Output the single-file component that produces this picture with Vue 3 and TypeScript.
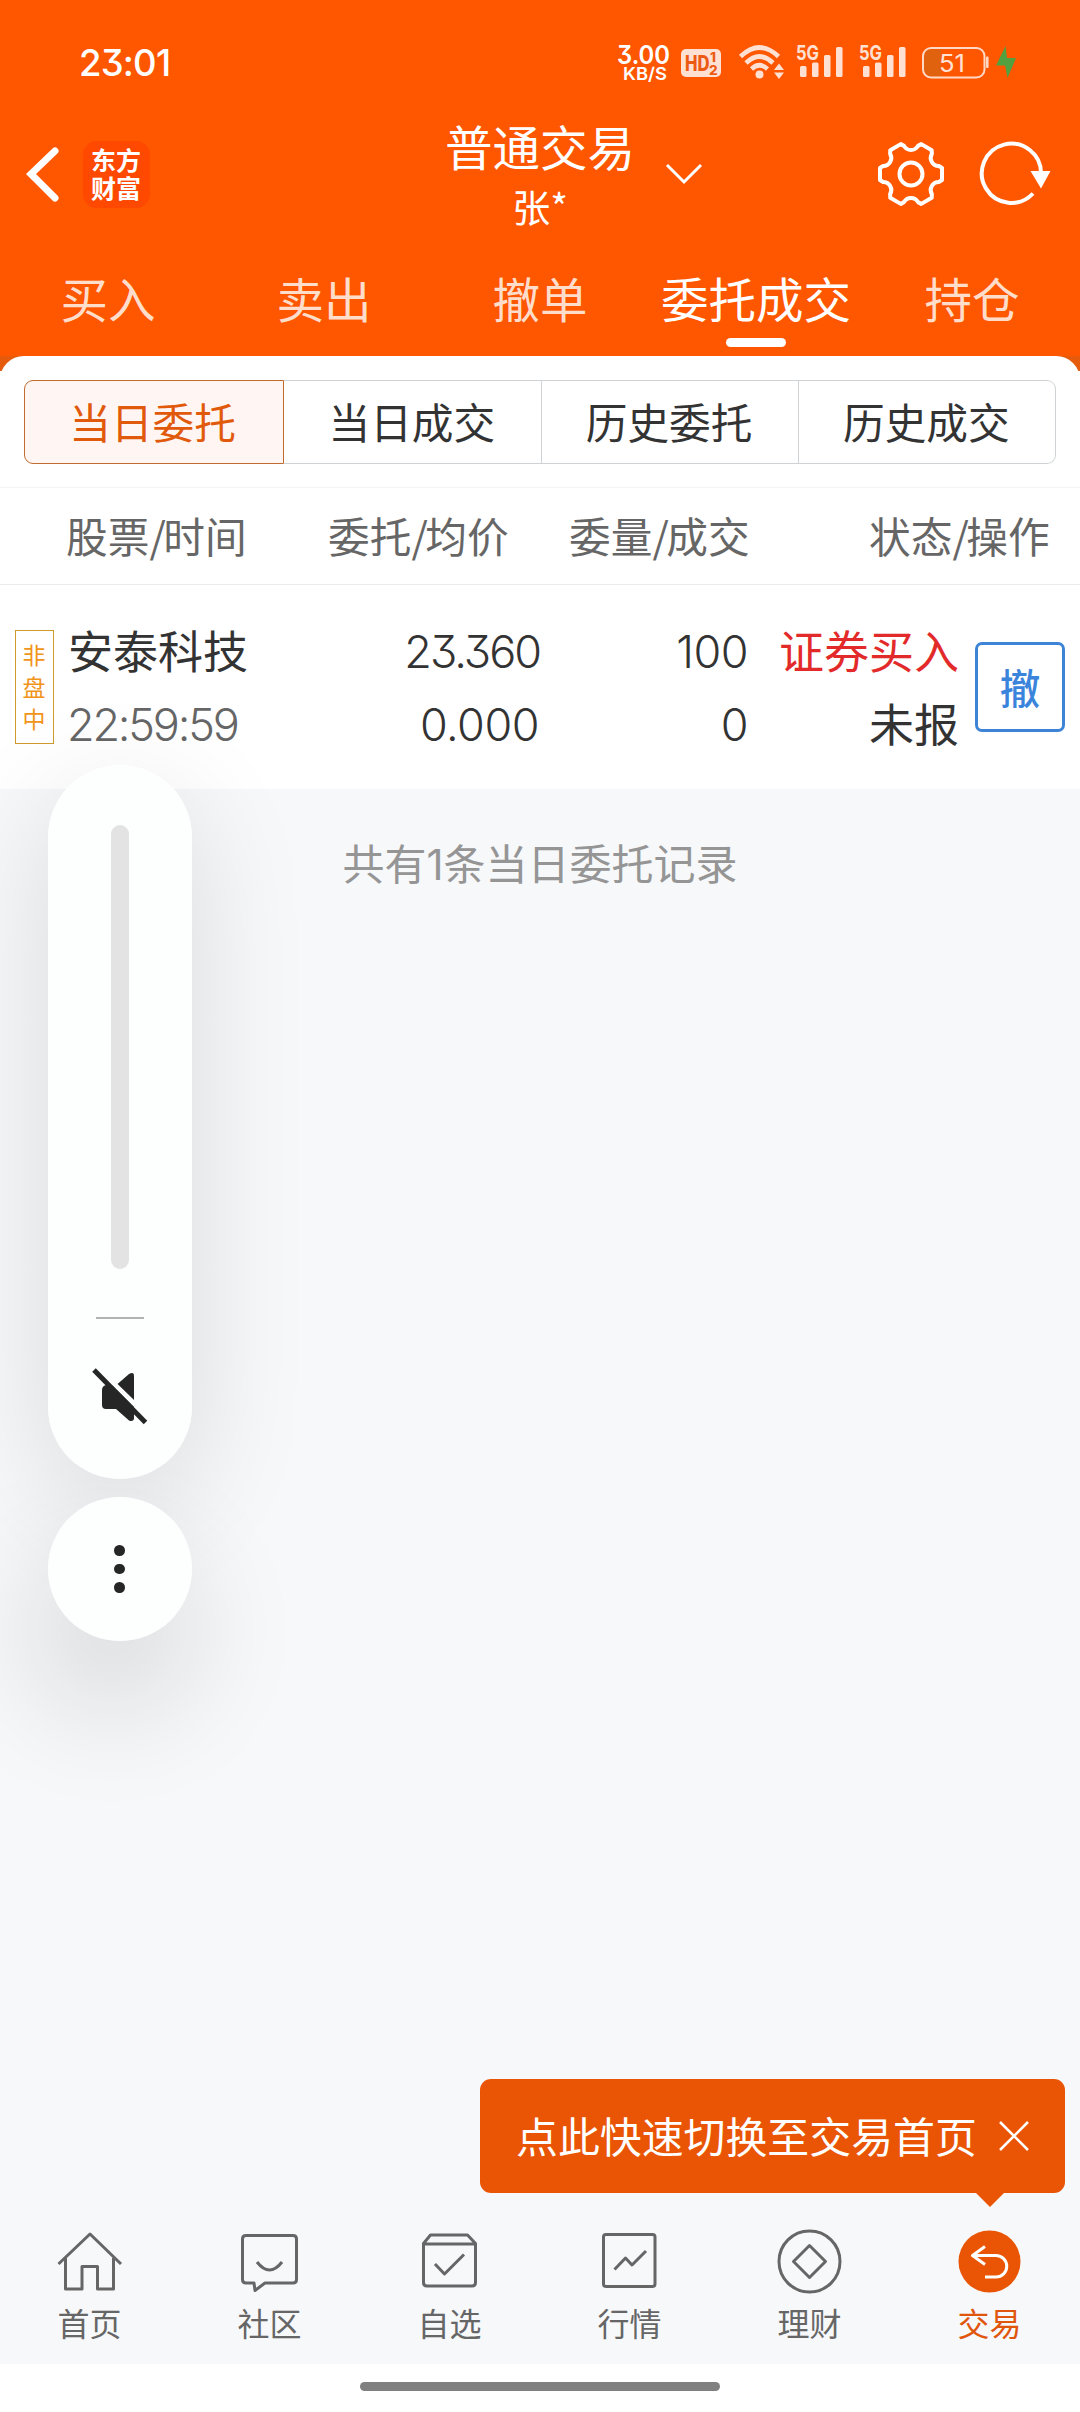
<script setup lang="ts">
interface TabItem { label: string; active?: boolean }

const tabs: TabItem[] = [
  { label: '买入' },
  { label: '卖出' },
  { label: '撤单' },
  { label: '委托成交', active: true },
  { label: '持仓' },
]

const segments: TabItem[] = [
  { label: '当日委托', active: true },
  { label: '当日成交' },
  { label: '历史委托' },
  { label: '历史成交' },
]

const columns = [
  ['股票', '时间'],
  ['委托', '均价'],
  ['委量', '成交'],
  ['状态', '操作'],
]

const navItems = [
  { key: 'home', label: '首页' },
  { key: 'chat', label: '社区' },
  { key: 'box', label: '自选' },
  { key: 'chart', label: '行情' },
  { key: 'wealth', label: '理财' },
  { key: 'trade', label: '交易' },
]

// Six-tooth gear outline centred on the origin
function gearPath(): string {
  const at = (r: number, deg: number) => {
    const a = (deg * Math.PI) / 180
    return `${(r * Math.cos(a)).toFixed(2)} ${(r * Math.sin(a)).toFixed(2)}`
  }
  let d = `M${at(31.6, -11)}`
  for (let k = 0; k < 6; k++) {
    const c = k * 60
    d += ` L${at(31.6, c + 11)} L${at(29, c + 16)}`
    d += ` C${at(23, c + 20)} ${at(23, c + 40)} ${at(29, c + 44)}`
    d += ` L${at(31.6, c + 49)}`
  }
  return d + 'Z'
}
const gear = gearPath()
</script>

<template>
  <div class="screen">
    <header class="header">
      <div class="status">
        <span class="clock">23:01</span>
        <svg class="status-icons" width="410" height="44" viewBox="612 40 410 44">
          <g fill="#fff" class="inter">
            <text x="617" y="63.500" font-size="25" font-weight="600" textLength="53" lengthAdjust="spacingAndGlyphs">3.00</text>
            <text x="623" y="80" font-size="17.500" font-weight="600" textLength="44" lengthAdjust="spacingAndGlyphs">KB/S</text>
          </g>
          <g fill="#ffe1d3">
            <rect x="681" y="49" width="40" height="28" rx="5" />
            <path d="M763.500 74.500a4 4 0 1 1-8 0a4 4 0 1 1 8 0Z" />
            <path d="M774 70l5-6.500l5 6.500ZM774 72.500h10l-5 6.500Z" />
            <g fill="none" stroke="#ffe1d3" stroke-width="4.600">
              <path d="M740.500 56.500Q759.500 38.500 778.500 56.500" />
              <path d="M746 63Q759.500 50 773 63" />
              <path d="M751.500 69Q759.500 61.500 767.500 69" />
            </g>
            <g v-for="dx in [0, 63]" :key="dx" :transform="`translate(${dx} 0)`">
              <text class="inter" x="796" y="60" font-size="20.500" font-weight="700" textLength="23" lengthAdjust="spacingAndGlyphs">5G</text>
              <rect x="800" y="66" width="6.500" height="11" rx="1.500" />
              <rect x="812" y="62.500" width="6.500" height="14.500" rx="1.500" />
              <rect x="824" y="55" width="6.500" height="22" rx="1.500" />
              <rect x="836" y="47" width="6.500" height="30" rx="1.500" />
            </g>
          </g>
          <g fill="#ec5a14" class="inter" font-weight="800">
            <text x="685" y="71" font-size="21" textLength="24.500" lengthAdjust="spacingAndGlyphs">HD</text>
            <text x="710" y="62" font-size="13.500">1</text>
            <text x="709" y="74.500" font-size="13.500">2</text>
          </g>
          <path d="M931 49.500h10v27h-10a7 7 0 0 1-7-7v-13a7 7 0 0 1 7-7Z" fill="#e0620f" />
          <rect x="923" y="48" width="61.500" height="29.500" rx="8" fill="none" stroke="#ffd9c6" stroke-width="2" />
          <rect x="986" y="56.500" width="2.600" height="11.500" rx="1" fill="#ffd9c6" />
          <text class="inter" x="939" y="72" font-size="24" fill="#ffe1d3" textLength="26" lengthAdjust="spacingAndGlyphs">51</text>
          <path d="M1005.500 46L996 65.500h9l2.500 12.500L1016 58h-9Z" fill="#52a03f" />
        </svg>
      </div>

      <div class="titlebar">
        <div class="side">
          <svg width="36" height="60" viewBox="25 144 36 60">
            <path d="M55 151L31 174L55 198" fill="none" stroke="#fff" stroke-width="7" stroke-linecap="round" />
          </svg>
          <div class="logo"><span>东方</span><span>财富</span></div>
        </div>
        <div class="titles">
          <h1>普通交易</h1>
          <p>张*</p>
          <svg class="caret" width="40" height="24" viewBox="664 162 40 24">
            <path d="M667 165L684 182L701 165" fill="none" stroke="#fff" stroke-width="3" />
          </svg>
        </div>
        <div class="side actions">
          <svg width="70" height="70" viewBox="-35 -35 70 70" fill="none" stroke="#fff">
            <path :d="gear" stroke-width="4" stroke-linejoin="round" />
            <circle r="11.500" stroke-width="4" />
          </svg>
          <svg width="72" height="70" viewBox="979 139 72 70">
            <path d="M1033 193.500A29.600 29.600 0 1 1 1041 174" fill="none" stroke="#fff" stroke-width="4" />
            <path d="M1030.500 171h20l-9.500 17.500Z" fill="#fff" />
          </svg>
        </div>
      </div>

      <nav class="tabs">
        <div v-for="t in tabs" :key="t.label" class="tab" :class="{ active: t.active }">
          <span>{{ t.label }}</span><i v-if="t.active"></i>
        </div>
      </nav>
    </header>

    <main class="panel-wrap">
      <section class="panel">
        <div class="segments">
          <div v-for="s in segments" :key="s.label" class="segment" :class="{ active: s.active }">{{ s.label }}</div>
        </div>
        <div class="thead">
          <span v-for="c in columns" :key="c[0]">{{ c[0] }}<span class="slash">/</span>{{ c[1] }}</span>
        </div>
        <div class="row">
          <div class="badge"><span>非</span><span>盘</span><span>中</span></div>
          <div class="cell name"><span>安泰科技</span><span class="num time">22:59:59</span></div>
          <div class="cell price"><span class="num tight">23.360</span><span class="num">0.000</span></div>
          <div class="cell qty"><span class="num">100</span><span class="num">0</span></div>
          <div class="cell state"><span class="buy">证券买入</span><span>未报</span></div>
          <button class="cancel">撤</button>
        </div>
      </section>
    </main>

    <p class="summary">共有<span class="one">1</span>条当日委托记录</p>

    <aside class="volume">
      <div class="pill">
        <div class="track"></div>
        <div class="sep"></div>
        <svg width="60" height="60" viewBox="90 1366 60 60">
          <path d="M102 1389q0-4 4-5h6L134 1405V1418q-1 3-5 1.500L116 1408H106q-4 0-4-4Z" fill="#262626" />
          <path d="M117.500 1383L129 1373q5-3 5 2V1399Z" fill="#262626" />
          <path d="M97 1366L149 1418" stroke="#fdfefe" stroke-width="4" />
          <path d="M94 1369L145.500 1421.500" stroke="#262626" stroke-width="5" />
        </svg>
      </div>
      <div class="more"><i></i><i></i><i></i></div>
    </aside>

    <div class="tip">
      <span>点此快速切换至交易首页</span>
      <svg width="32" height="32" viewBox="0 0 32 32"><path d="M2 2L30 30M30 2L2 30" stroke="#fff" stroke-width="2.600" /></svg>
    </div>

    <footer class="bottom">
      <nav class="bottom-nav">
        <div v-for="n in navItems" :key="n.key" class="nav-item" :class="{ current: n.key === 'trade' }">
          <svg v-if="n.key === 'home'" width="70" height="70" viewBox="55 2226 70 70">
            <path d="M58.500 2264L90 2234L121 2264M65.500 2258V2289H82V2266.500H97.500V2289H113.500V2258" />
          </svg>
          <svg v-else-if="n.key === 'chat'" width="70" height="70" viewBox="235 2226 70 70">
            <path d="M246 2235.500H293q3.500 0 3.500 3.500V2279.500q0 3.500-3.500 3.500H265L255 2290.500L254 2283H246q-3.500 0-3.500-3.500V2239q0-3.500 3.500-3.500ZM257 2262Q269.500 2278 282 2262" />
          </svg>
          <svg v-else-if="n.key === 'box'" width="70" height="70" viewBox="415 2226 70 70">
            <path d="M423.500 2243.500L430.500 2235H467.500L475.500 2243.500V2282.500q0 3.500-3.500 3.500H427q-3.500 0-3.500-3.500ZM423.500 2244H475.500M435 2264L444.500 2274L464 2254.500" />
          </svg>
          <svg v-else-if="n.key === 'chart'" width="70" height="70" viewBox="595 2226 70 70">
            <rect x="603.500" y="2234.500" width="51.500" height="52" rx="2.500" />
            <path d="M614.500 2269.500L625.500 2258L632 2265L646 2251" />
          </svg>
          <svg v-else-if="n.key === 'wealth'" width="70" height="70" viewBox="775 2226 70 70">
            <circle cx="809.500" cy="2261.500" r="30.500" />
            <path d="M809.500 2245.500L825.500 2261.500L809.500 2277.500L793.500 2261.500Z" />
          </svg>
          <svg v-else width="70" height="70" viewBox="955 2226 70 70">
            <circle cx="989.500" cy="2261.500" r="31" fill="#e95504" stroke="none" />
            <path d="M985 2246.500L972.500 2255.500L985 2264.500M973 2255.500H996A10.700 10.700 0 0 1 996 2277H985" stroke="#fff" />
          </svg>
          <span>{{ n.label }}</span>
        </div>
      </nav>
      <div class="gesture"><i></i></div>
    </footer>
  </div>
</template>

<style>
body { margin: 0; }
</style>

<style scoped>
.screen {
  position: relative;
  width: 1080px;
  height: 2412px;
  display: flex;
  flex-direction: column;
  overflow: hidden;
  background: #f7f8fa;
  color: #333;
  font-family: "Noto Sans CJK SC", sans-serif;
}
h1, p { margin: 0; font-weight: 400; }
.inter { font-family: Inter, sans-serif; font-feature-settings: "cv09"; }

.header { height: 356px; background: #ff5600; color: #fff; display: flex; flex-direction: column; }
.status { height: 124px; display: flex; align-items: center; justify-content: space-between; padding: 0 58px 0 79px; box-sizing: border-box; }
.clock { font: 500 36.5px/44px Inter, sans-serif; font-feature-settings: "cv09"; letter-spacing: -.8px; padding-top: 2px; }
.titlebar { height: 112px; display: flex; justify-content: space-between; }
.side { width: 180px; height: 100px; display: flex; align-items: center; padding-left: 25px; }
.logo {
  width: 67px; height: 67px; margin-left: 22px; border-radius: 14px; background: #ff4800;
  display: flex; flex-direction: column; align-items: center; justify-content: center;
  font-size: 25px; line-height: 29px; font-weight: 700;
}
.logo span { margin-top: -1px; margin-right: 1px; }
.actions { width: 175px; padding: 0 29px 0 0; justify-content: flex-end; gap: 33px; box-sizing: content-box; }
.titles { position: relative; display: flex; flex-direction: column; align-items: center; margin-right: 1px; }
.titles h1 { font-size: 47.5px; line-height: 50px; margin-top: -3px; }
.titles p { font-size: 38px; line-height: 46px; padding-top: 12px; }
.caret { position: absolute; left: 219px; top: 38px; }
.tabs { height: 120px; display: flex; }
.tab { flex: 1; display: flex; flex-direction: column; align-items: center; font-size: 47.5px; line-height: 60px; padding-top: 32px; color: #ffddcb; white-space: nowrap; }
.tab.active { color: #fff; }
.tab i { width: 60px; height: 9px; border-radius: 5px; background: #fff; margin-top: 10px; }

.panel-wrap { background: linear-gradient(#e65a0c 15px, #fff 15px); }
.panel { background: #fff; border-radius: 24px 24px 0 0; height: 433px; display: flex; flex-direction: column; }
.segments { margin: 24px 24px 0; height: 84px; display: flex; }
.segment {
  flex: 1; box-sizing: border-box; border: 1px solid #d0d3d5; border-left-width: 0;
  display: flex; align-items: center; justify-content: center; font-size: 41.7px; line-height: 60px; padding: 0 1px 2px 0;
}
.segment:last-child { border-radius: 0 9px 9px 0; }
.segment.active { border: 1px solid #c06c30; border-radius: 9px 0 0 9px; background: #fff6f3; color: #e15a0c; padding-right: 3px; }
.thead {
  margin-top: 23px; height: 98px; box-sizing: border-box; border-top: 1px solid #f4f4f4; border-bottom: 1px solid #ebebeb;
  display: grid; grid-template-columns: 262px 241px 300px 1fr; padding: 0 0 2px 66px; align-items: center;
  font-size: 41.7px; line-height: 60px; color: #666;
}
.slash { letter-spacing: -2.500px; }
.row { flex: 1; display: flex; padding-top: 45px; }
.badge {
  width: 39px; height: 114px; margin-left: 15px; box-sizing: border-box; border: 1.500px solid #cf9a2e;
  color: #f0941a; font-size: 23px; line-height: 32px; text-align: center; padding: 7px 1px 0 0;
  display: flex; flex-direction: column;
}
.cell { display: flex; flex-direction: column; font-size: 45px; line-height: 72.500px; margin-top: -16px; white-space: nowrap; }
.cell span { height: 72.500px; }
.cell .num {
  font-family: Inter, sans-serif; font-weight: 350; font-feature-settings: "cv09"; letter-spacing: -.500px;
  position: relative; top: 2px; margin-right: 1px;
}
.cell .tight { letter-spacing: -2px; margin-right: 0; }
.name { width: 200px; margin-left: 14px; }
.cell .time { color: #666; letter-spacing: -2.200px; left: -1px; }
.price, .qty, .state { align-items: flex-end; }
.price { width: 272px; }
.qty { width: 209px; }
.state { width: 210px; }
.buy { color: #e32a2a; }
.cancel {
  width: 90px; height: 90px; box-sizing: border-box; margin: 12px 0 0 16px; padding: 0; border: 3px solid #3d84d6;
  border-radius: 7px; background: #fff; color: #3a84dc; font: 500 40.5px/82px "Noto Sans CJK SC", sans-serif;
}
.summary { margin-top: 43px; text-align: center; font-size: 42px; line-height: 60px; color: #959595; }
.one { font-family: Inter, sans-serif; }

.volume { position: absolute; left: 48px; top: 765px; width: 144px; display: flex; flex-direction: column; gap: 18px; }
.pill, .more { z-index: 1; background: #fdfefe; border-radius: 72px; display: flex; flex-direction: column; align-items: center; position: relative; }
.volume::before, .volume::after { content: ""; position: absolute; left: 0; width: 144px; border-radius: 72px; }
.volume::before { top: 0; height: 714px; box-shadow: 0 30px 120px rgba(20, 20, 20, .12); }
.volume::after { top: 732px; height: 144px; box-shadow: -8px 60px 120px 6px rgba(20, 20, 20, .14); }
.pill { height: 714px; }
.track { width: 18px; height: 444px; margin-top: 60px; border-radius: 9px; background: #e3e3e3; }
.sep { width: 48px; height: 2px; margin: 48px 0; background: #b2b2b2; }
.more { height: 144px; justify-content: center; gap: 8px; }
.more i { width: 10.500px; height: 10.500px; border-radius: 50%; background: #262626; margin-right: 1px; }

.tip {
  position: absolute; left: 480px; top: 2079px; width: 585px; height: 114px; box-sizing: border-box; border-radius: 11px;
  background: #e95504; color: #fff; display: flex; align-items: center; padding: 0 35px 0 36px; justify-content: space-between;
  font-size: 41.9px; line-height: 60px; white-space: nowrap;
}
.tip span { margin-top: -3px; }
.tip::after { content: ""; position: absolute; left: 495px; top: 113px; border: 15px solid transparent; border-top-color: #e95504; border-bottom: 0; }

.bottom { margin-top: auto; }
.bottom-nav { display: flex; height: 138px; }
.nav-item { flex: 1; display: flex; flex-direction: column; align-items: center; font-size: 32px; line-height: 40px; color: #666; }
.nav-item svg { fill: none; stroke: #666; stroke-width: 3; stroke-linejoin: round; }
.nav-item span { margin: 6px 1px 0 0; }
.nav-item.current { color: #e0560c; }
.gesture { height: 48px; background: #fff; display: flex; justify-content: center; padding-top: 18px; box-sizing: border-box; }
.gesture i { width: 360px; height: 9px; border-radius: 5px; background: #808080; }
</style>
